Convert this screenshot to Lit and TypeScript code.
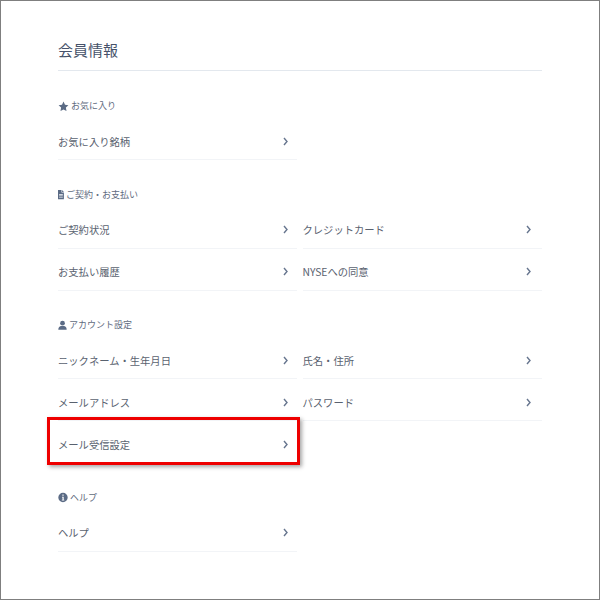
import { LitElement, html, css, svg } from "lit";
import { customElement } from "lit/decorators.js";

const icons: Record<string, { w: number; g: unknown }> = {
  star: { w: 11, g: svg`<path d="M5.500.6l1.500 3.100 3.400.5-2.500 2.400.6 3.400-3-1.600-3 1.600.6-3.400L.6 4.200 4 3.700z"/>` },
  file: { w: 6, g: svg`<path fill-rule="evenodd" d="M0 1h3.500v2.600h2.400v6.600H0zM4.100 1l1.800 2H4.100zM1.100 5h3.700v.7H1.100zM1.100 6.400h3.700v.7H1.100zM1.100 7.800h3.700v.7H1.100z"/>` },
  user: { w: 9, g: svg`<circle cx="4.500" cy="3.200" r="2.400"/><path d="M.3 9.800c0-2.500 1.400-3.700 2.800-3.700h2.800c1.400 0 2.800 1.200 2.800 3.700z"/>` },
  info: { w: 10, g: svg`<path fill-rule="evenodd" d="M5 .8a4.700 4.700 0 1 0 0 9.400A4.700 4.700 0 0 0 5 .8zM4.400 2.500h1.200v1.300H4.400zM4 4.700h1.700v3h.6v.9H3.800v-.9h.7V5.600H4z"/>` },
};

type Sec = { icon: string; label: string; items: string[] };
const sections: Sec[] = [
  { icon: "star", label: "お気に入り", items: ["お気に入り銘柄"] },
  { icon: "file", label: "ご契約・お支払い", items: ["ご契約状況", "クレジットカード", "お支払い履歴", "NYSEへの同意"] },
  { icon: "user", label: "アカウント設定", items: ["ニックネーム・生年月日", "氏名・住所", "メールアドレス", "パスワード", "メール受信設定"] },
  { icon: "info", label: "ヘルプ", items: ["ヘルプ"] },
];

@customElement("app-root")
export class AppRoot extends LitElement {
  static styles = css`
    :host {
      display: block;
      width: 600px;
      height: 600px;
      box-sizing: border-box;
      border: 1px solid #7f7f7f;
      background: #fff;
      position: relative;
      font-family: "Noto Sans CJK JP", "Noto Sans", sans-serif;
      color: #515c6f;
      overflow: hidden;
    }
    .page { padding: 33px 57px 0; display: flex; flex-direction: column; }
    h1 {
      margin: 0;
      height: 36px;
      line-height: 32px;
      font-size: 15px;
      font-weight: 400;
      color: #46526a;
      border-bottom: 1px solid #e3e8ee;
    }
    section { margin-top: 26.500px; }
    section:first-of-type { margin-top: 27px; }
    .label {
      display: flex;
      align-items: center;
      gap: 2px;
      height: 16px;
      font-size: 9px;
      line-height: 16px;
      color: #5f6b80;
    }
    .label svg { height: 11px; fill: #5b6b85; flex: none; }
    .grid {
      display: grid;
      grid-template-columns: 238.500px 239.500px;
      column-gap: 6px;
      margin-top: 4px;
    }
    .row {
      display: flex;
      align-items: center;
      justify-content: space-between;
      box-sizing: border-box;
      height: 42px;
      padding: 5px 9px 0 0;
      border-bottom: 1px solid #f2f4f7;
      font-size: 10.300px;
      color: #59626f;
    }
    .row:nth-child(even) { padding-right: 11px; }
    .row.last { border-bottom-color: transparent; }
    .row svg { width: 5px; height: 9px; fill: none; stroke: #66758e; stroke-width: 1.400; }
    .mark {
      position: absolute;
      left: 46px;
      top: 416px;
      width: 253px;
      height: 48px;
      box-sizing: border-box;
      border: 3px solid #ee0000;
      box-shadow: 2px 2px 4px rgba(0, 0, 0, 0.35);
      pointer-events: none;
    }
  `;

  render() {
    return html`<div class="page">
        <h1>会員情報</h1>
        ${sections.map((s) => {
          const ic = icons[s.icon];
          return html`<section>
            <div class="label">
              <svg viewBox="0 0 ${ic.w} 11" style="width:${ic.w}px">${ic.g}</svg>${s.label}
            </div>
            <div class="grid">
              ${s.items.map(
                (t) => html`<div class="row ${t === "メール受信設定" ? "last" : ""}">
                  <span>${t}</span>
                  <svg viewBox="0 0 5 9"><path d="M1 1l3 3.500-3 3.500" /></svg>
                </div>`
              )}
            </div>
          </section>`;
        })}
      </div>
      <div class="mark"></div>`;
  }
}
